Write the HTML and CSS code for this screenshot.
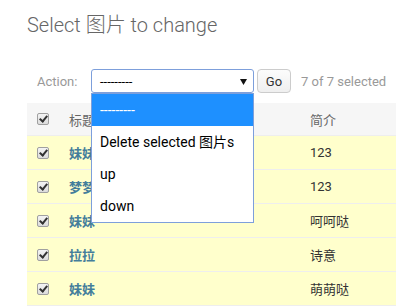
FILE: index.html
```html
<!DOCTYPE html>
<html lang="en">
<head>
    <meta charset="UTF-8">
    <title>Select 图片 to change</title>
    <link rel="stylesheet" href="styles.css">
</head>
<body>
    <div class="content">
        <h1>Select 图片 to change</h1>
        <div class="changelist">
            <div class="actions">
                <label class="action-label">Action:</label>
                <div class="select-wrap">
                    <div class="select">
                        <span>---------</span>
                        <svg class="arrow" width="7" height="6" viewBox="0 0 7 6"><path d="M0 0H7L3.5 6Z" fill="#111"/></svg>
                    </div>
                    <div class="dropdown">
                        <div class="option active">---------</div>
                        <div class="option">Delete selected 图片s</div>
                        <div class="option">up</div>
                        <div class="option">down</div>
                    </div>
                </div>
                <button class="go">Go</button>
                <span class="counter">7 of 7 selected</span>
            </div>
            <table class="result-list">
                <thead>
                    <tr>
                        <th class="col-check"><span class="cb"></span></th>
                        <th class="col-title">标题</th>
                        <th>简介</th>
                    </tr>
                </thead>
                <tbody>
                    <tr>
                        <td class="col-check"><span class="cb"></span></td>
                        <td class="col-title"><a href="#">妹妹</a></td>
                        <td>123</td>
                    </tr>
                    <tr>
                        <td class="col-check"><span class="cb"></span></td>
                        <td class="col-title"><a href="#">梦梦</a></td>
                        <td>123</td>
                    </tr>
                    <tr>
                        <td class="col-check"><span class="cb"></span></td>
                        <td class="col-title"><a href="#">妹妹</a></td>
                        <td>呵呵哒</td>
                    </tr>
                    <tr>
                        <td class="col-check"><span class="cb"></span></td>
                        <td class="col-title"><a href="#">拉拉</a></td>
                        <td>诗意</td>
                    </tr>
                    <tr>
                        <td class="col-check"><span class="cb"></span></td>
                        <td class="col-title"><a href="#">妹妹</a></td>
                        <td>萌萌哒</td>
                    </tr>
                </tbody>
            </table>
        </div>
    </div>
</body>
</html>
```

FILE: styles.css
```css
body {
    margin: 0;
    font-family: Roboto, "Noto Sans CJK SC", sans-serif;
    font-size: 13px;
    color: #333;
    background: #fff;
    overflow: hidden;
}
.content {
    padding-left: 27px;
}
h1 {
    margin: 13px 0 26px;
    font-size: 20px;
    line-height: 24px;
    font-weight: 300;
    color: #666;
}
.actions {
    display: flex;
    align-items: center;
    padding: 6px 10px 10px;
    height: 24px;
    color: #999;
    white-space: nowrap;
}
.action-label {
    width: 54px;
    flex-shrink: 0;
}
.select-wrap {
    position: relative;
    flex-shrink: 0;
}
.select {
    box-sizing: border-box;
    width: 163px;
    height: 24px;
    border: 1px solid #7d9fdb;
    border-radius: 3px;
    display: flex;
    align-items: center;
    justify-content: space-between;
    padding: 0 6px 0 8px;
    color: #000;
    background: #fff;
}
.arrow {
    margin-top: 1px;
}
.dropdown {
    position: absolute;
    left: 0;
    top: 24px;
    box-sizing: border-box;
    width: 163px;
    border: 1px solid #7d9fdb;
    background: #fff;
    z-index: 2;
}
.option {
    height: 32px;
    line-height: 32px;
    padding-left: 8px;
    font-size: 14px;
    color: #000;
    white-space: nowrap;
}
.option.active {
    background: #1e90ff;
    color: #fff;
}
.go {
    box-sizing: border-box;
    flex-shrink: 0;
    margin-left: 3px;
    width: 34px;
    height: 24px;
    border: 1px solid #ccc;
    border-radius: 4px;
    background: linear-gradient(#fcfcfc, #efefef);
    font-family: inherit;
    font-size: 13px;
    color: #333;
    padding: 0;
}
.counter {
    margin-left: 10px;
}
.result-list {
    border-collapse: collapse;
    width: 100%;
}
.result-list th,
.result-list td {
    padding: 0 10px;
    text-align: left;
    border-bottom: 1px solid #eee;
    height: 33px;
    vertical-align: middle;
}
.result-list thead th {
    background: #f6f6f6;
    color: #666;
    font-weight: 400;
    height: 32px;
}
.result-list tbody td {
    background: #ffffcc;
}
.col-check {
    width: 12px;
}
.col-title {
    width: 221px;
}
.result-list a {
    color: #447e9b;
    font-weight: bold;
    text-decoration: none;
}
.cb {
    display: block;
    box-sizing: border-box;
    width: 12px;
    height: 12px;
    border: 1px solid #a0a0a0;
    border-radius: 2px;
    background: linear-gradient(#f4f4f4, #dcdcdc);
    position: relative;
}
.cb::after {
    content: "";
    position: absolute;
    left: 3px;
    top: 0px;
    width: 3px;
    height: 6px;
    border: solid #333;
    border-width: 0 2px 2px 0;
    transform: rotate(40deg);
}
```
